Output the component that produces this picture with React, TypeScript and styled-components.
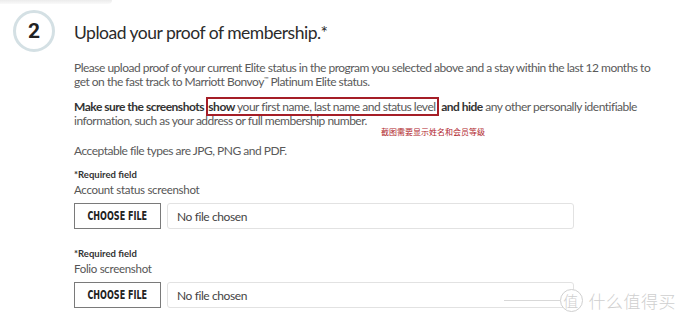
import React from "react";
import styled, { createGlobalStyle } from "styled-components";

const GlobalStyle = createGlobalStyle`
  html, body { margin: 0; padding: 0; background: #ffffff; }
  body { font-family: Lato, "Noto Sans", sans-serif; color: #555; }
`;

const Page = styled.div`
  position: relative;
  width: 680px;
  height: 324px;
  overflow: hidden;
  background: #fff;
`;

const TopShade = styled.div`
  width: 112px;
  height: 4px;
  background: linear-gradient(#ececec, #fafafa);
  border-radius: 0 0 4px 0;
`;

const Section = styled.div`
  display: flex;
  align-items: flex-start;
  padding-left: 13px;
  margin-top: 6px;
`;

const StepCircle = styled.div`
  flex: none;
  width: 36px;
  height: 36px;
  border: 3px solid #d4e0e4;
  border-radius: 50%;
  display: flex;
  align-items: center;
  justify-content: center;
  font-family: Roboto, "Liberation Sans", sans-serif;
  font-weight: 700;
  font-size: 21px;
  color: #222;
`;

const Content = styled.div`
  margin-left: 19px;
  display: flex;
  flex-direction: column;
`;

const Heading = styled.h2`
  margin: 11px 0 0 0;
  font-weight: 400;
  font-size: 17.5px;
  letter-spacing: -0.5px;
  line-height: 24px;
  color: #2b2b2b;
`;

const Para = styled.p<{ $top: number }>`
  position: relative;
  margin: ${(p) => p.$top}px 0 0 0;
  font-size: 12px;
  letter-spacing: -0.5px;
  line-height: 14px;
  color: #5a5a5a;
  white-space: nowrap;
`;

const Strong = styled.b`
  font-weight: 700;
  color: #333;
`;

const Tm = styled.sup`
  font-size: 6px;
  vertical-align: 5px;
  line-height: 0;
`;

const Highlight = styled.span`
  border: 2px solid #a51e27;
  padding: 0 1px 0 0;
`;

const Note = styled.span`
  position: absolute;
  left: 307px;
  top: 27px;
  font-family: "Noto Sans CJK SC", sans-serif;
  font-size: 8px;
  letter-spacing: 0;
  line-height: 10px;
  color: #b0262c;
`;

const Required = styled.div<{ $top: number }>`
  margin-top: ${(p) => p.$top}px;
  font-size: 9.5px;
  line-height: 12px;
  font-weight: 700;
  color: #333;
`;

const FieldLabel = styled.div`
  margin-top: 2px;
  font-size: 11.5px;
  letter-spacing: -0.3px;
  line-height: 14px;
  color: #555;
`;

const FileRow = styled.div`
  margin-top: 6px;
  display: flex;
  gap: 6px;
`;

const ChooseButton = styled.div`
  width: 85px;
  height: 24px;
  border: 1px solid #7a7a7a;
  display: flex;
  align-items: center;
  justify-content: center;
  background: #fff;
`;

const ButtonText = styled.span`
  display: inline-block;
  font-family: "DejaVu Sans Condensed", "DejaVu Sans", sans-serif;
  font-stretch: condensed;
  font-weight: 700;
  font-size: 11.5px;
  color: #222;
  transform: scaleX(0.78);
  white-space: nowrap;
`;

const FileBox = styled.div`
  width: 396px;
  height: 24px;
  border: 1px solid #e2e2e2;
  border-radius: 3px;
  display: flex;
  align-items: center;
  padding-left: 9px;
  font-size: 12px;
  letter-spacing: -0.4px;
  color: #444;
`;

const Watermark = styled.div`
  position: absolute;
  right: 4px;
  bottom: 11px;
  display: flex;
  align-items: center;
  gap: 6px;
  color: #cfcfcf;
  font-family: "Noto Sans CJK SC", sans-serif;
  font-weight: 300;
  font-size: 17px;
  letter-spacing: 0.5px;
`;

const WmLine = styled.div`
  width: 56px;
  height: 1px;
  background: #d8d8d8;
  margin-right: -6px;
`;

const WmBadge = styled.div`
  width: 21px;
  height: 21px;
  border: 1.5px solid #d0d0d0;
  border-radius: 50%;
  display: flex;
  align-items: center;
  justify-content: center;
  font-size: 15px;
  background: #fff;
`;

export default function App() {
  return (
    <Page>
      <GlobalStyle />
      <TopShade />
      <Section>
        <StepCircle>2</StepCircle>
        <Content>
          <Heading>Upload your proof of membership.*</Heading>
          <Para $top={16}>
            Please upload proof of your current Elite status in the program you selected above and a stay within the last 12 months to
            <br />
            get on the fast track to Marriott Bonvoy<Tm>™</Tm> Platinum Elite status.
          </Para>
          <Para $top={11}>
            <Strong>Make sure the screenshots </Strong>
            <Highlight>
              <Strong>show</Strong> your first name, last name and status level
            </Highlight>{" "}
            <Strong>and hide</Strong> any other personally identifiable
            <br />
            information, such as your address or full membership number.
            <Note>截图需要显示姓名和会员等级</Note>
          </Para>
          <Para $top={16}>Acceptable file types are JPG, PNG and PDF.</Para>
          <Required $top={11}>*Required field</Required>
          <FieldLabel>Account status screenshot</FieldLabel>
          <FileRow>
            <ChooseButton>
              <ButtonText>CHOOSE FILE</ButtonText>
            </ChooseButton>
            <FileBox>No file chosen</FileBox>
          </FileRow>
          <Required $top={19}>*Required field</Required>
          <FieldLabel>Folio screenshot</FieldLabel>
          <FileRow>
            <ChooseButton>
              <ButtonText>CHOOSE FILE</ButtonText>
            </ChooseButton>
            <FileBox>No file chosen</FileBox>
          </FileRow>
        </Content>
      </Section>
      <Watermark>
        <WmLine />
        <WmBadge>值</WmBadge>
        <span>什么值得买</span>
      </Watermark>
    </Page>
  );
}
